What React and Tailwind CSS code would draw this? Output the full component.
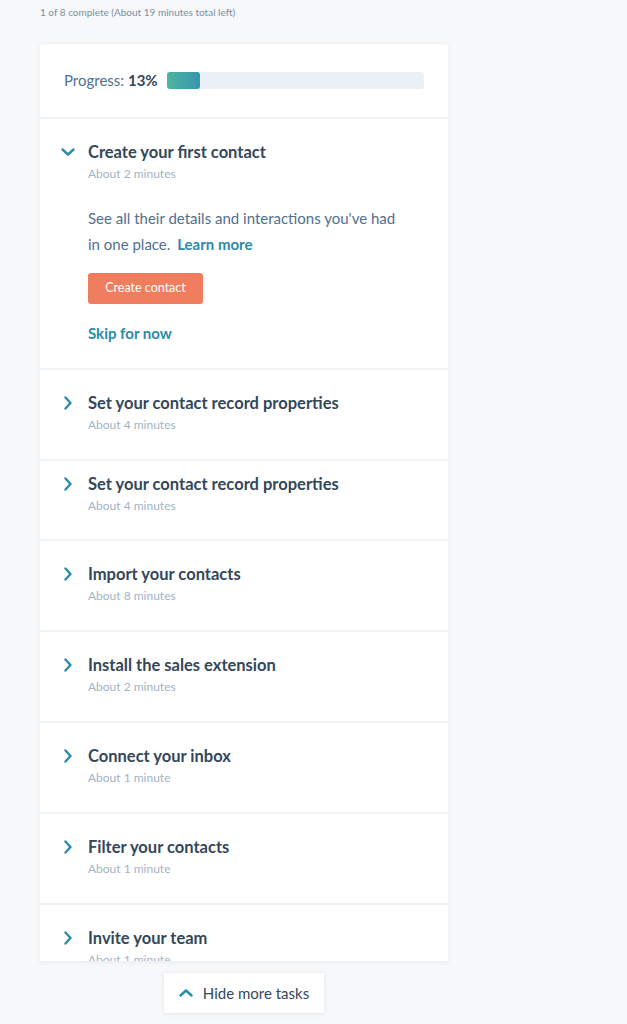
import { useState } from "react";

const tasks = [
    { id: 2, title: "Set your contact record properties", time: "About 4 minutes" },
    { id: 3, title: "Set your contact record properties", time: "About 4 minutes", compact: true },
    { id: 4, title: "Import your contacts", time: "About 8 minutes" },
    { id: 5, title: "Install the sales extension", time: "About 2 minutes" },
    { id: 6, title: "Connect your inbox", time: "About 1 minute" },
    { id: 7, title: "Filter your contacts", time: "About 1 minute" },
    { id: 8, title: "Invite your team", time: "About 1 minute" },
];

function Chevron({ dir = "right" }) {
    const paths = {
        right: "M4.5 1.5l5 5.5-5 5.5",
        down: "M1.5 4.5l5.5 5 5.5-5",
        up: "M1.5 9.5l5.5-5 5.5 5",
    };
    return (
        <svg width="14" height="14" viewBox="0 0 14 14" fill="none" className="shrink-0">
            <path d={paths[dir]} stroke="#2a8ca8" strokeWidth="2.4" strokeLinecap="round" strokeLinejoin="round" />
        </svg>
    );
}

function TaskRow({ task }) {
    return (
        <div className={`bg-white shrink-0 flex ${task.compact ? "pt-[13px] h-[78px]" : "pt-[23px] h-[89px]"} pl-[21px] pr-6`}>
            <div className="w-[27px] pt-[3px]">
                <Chevron dir="right" />
            </div>
            <div>
                <div className="text-[16.5px] leading-5 font-bold text-[#33475b]">{task.title}</div>
                <div className="text-[12px] leading-4 mt-[4px] text-[#a3b3c4]">{task.time}</div>
            </div>
        </div>
    );
}

export default function App() {
    const [open] = useState(true);

    return (
        <div className="h-[1024px] bg-[#f6f8fa] pl-10 pt-[4px] font-['Lato',sans-serif] overflow-hidden">
            <p className="text-[10px] leading-4 text-[#7c8fa3]">1 of 8 complete (About 19 minutes total left)</p>

            <div className="mt-[24px] w-[408px] h-[917px] overflow-hidden bg-[#f0f3f6] flex flex-col gap-[2px] shadow-[0_1px_4px_rgba(45,62,80,0.08)] rounded-t-[3px]">
                <div className="bg-white shrink-0 h-[73px] flex items-center pl-6 pr-6">
                    <span className="text-[15px] text-[#516f90]">
                        Progress: <span className="font-bold text-[#33475b]">13%</span>
                    </span>
                    <div className="ml-[9px] flex-1 h-[17px] rounded-[3px] bg-[#eaf0f6]">
                        <div className="h-full w-[33px] rounded-[3px] bg-gradient-to-r from-[#4db59f] to-[#3a94ad]" />
                    </div>
                </div>

                {open && (
                    <div className="bg-white shrink-0 h-[249px] pt-[23px] pl-[21px] pr-6 flex">
                        <div className="w-[27px] pt-[3px]">
                            <Chevron dir="down" />
                        </div>
                        <div>
                            <div className="text-[16.5px] leading-5 font-bold text-[#33475b]">Create your first contact</div>
                            <div className="text-[12px] leading-4 mt-[4px] text-[#a3b3c4]">About 2 minutes</div>
                            <p className="mt-[23px] text-[15px] leading-[26px] text-[#516f90]">
                                See all their details and interactions you've had
                                <br />
                                in one place.{" "}
                                <a className="ml-[3px] font-bold text-[#2b8ba7]">Learn more</a>
                            </p>
                            <button className="mt-[16px] h-[31px] w-[115px] rounded-[3px] bg-[#ef7d5e] text-white text-[12.5px]">
                                Create contact
                            </button>
                            <div className="mt-[19px] text-[15px] leading-5 font-bold text-[#2b8ba7]">Skip for now</div>
                        </div>
                    </div>
                )}

                {tasks.map((task) => (
                    <TaskRow key={task.id} task={task} />
                ))}
            </div>

            <div className="mt-[12px] ml-[124px] w-[160px] h-[40px] bg-white shadow-[0_1px_4px_rgba(45,62,80,0.1)] flex items-center justify-center gap-[10px]">
                <Chevron dir="up" />
                <span className="text-[15px] text-[#33475b]">Hide more tasks</span>
            </div>
        </div>
    );
}
